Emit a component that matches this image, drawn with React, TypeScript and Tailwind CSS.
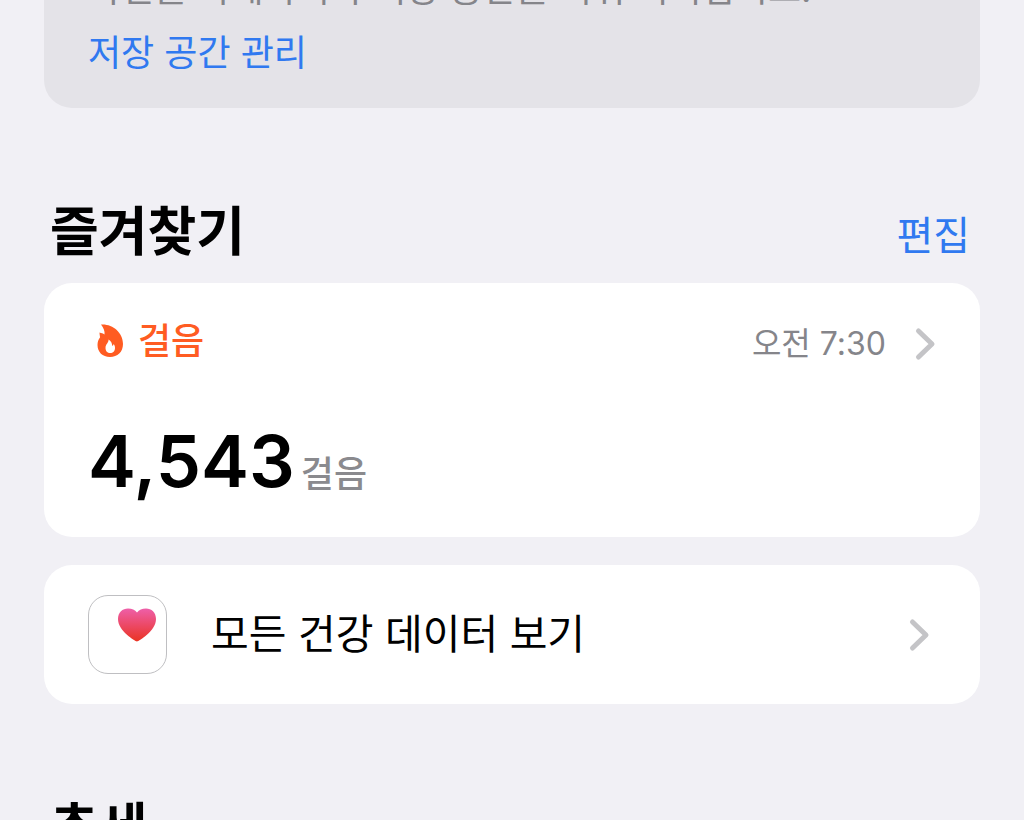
import React from 'react';

const Chevron: React.FC = () => (
  <svg width="22" height="34" viewBox="0 0 22 34" fill="none" aria-hidden="true">
    <path d="M4.500 4 L18 17 L4.500 30" stroke="#c4c4c7" strokeWidth="5" strokeLinecap="round" strokeLinejoin="round" />
  </svg>
);

const FlameIcon: React.FC = () => (
  <svg width="28" height="36" viewBox="0 0 28 36" aria-hidden="true">
    <path
      fill="#ff5c22"
      fillRule="evenodd"
      d="M5 1.500 C16 0.500 27 9 27 21 C27 29 21.500 34 14 34 C6.500 34 1.500 29 1.500 22 C1.500 18.500 2.500 16.500 4 14.500 C4 13 3.500 11.500 3.500 9.500 C5.500 10 7 10.500 8.500 11.500 C9 8 7.500 5 5 1.500 Z M12.500 16.500 C13 19.500 9.500 21 9.500 25 C9.500 28 11.500 30 14.200 30 C17 30 19 28 19 25 C19 23 18.500 22 17.500 21 C17.500 22 17 22.500 16.200 23 C16.200 20 15 18 12.500 16.500 Z"
    />
  </svg>
);

const HeartIcon: React.FC = () => (
  <svg width="38" height="34" viewBox="0 0 38 34" aria-hidden="true">
    <defs>
      <linearGradient id="heart" x1="0" y1="0" x2="0" y2="1">
        <stop offset="0" stopColor="#ee5fa9" />
        <stop offset="1" stopColor="#ea3323" />
      </linearGradient>
    </defs>
    <path
      fill="url(#heart)"
      d="M19 33.500 C17 33 0 23 0 11 C0 4.500 4.500 0.500 10 0.500 C14 0.500 17 2 19 4.500 C21 2 24 0.500 28 0.500 C33.500 0.500 38 4.500 38 11 C38 23 21 33 19 33.500 Z"
    />
  </svg>
);

const App: React.FC = () => {
  return (
    <main
      lang="ko"
      className="h-screen overflow-hidden bg-[#f1f0f5] px-11 font-['Inter','Noto_Sans_CJK_KR',sans-serif] text-black"
    >
      <section className="-mt-12 rounded-[28px] bg-[#e4e3e8] px-11 pt-3 pb-6 text-4xl">
        <p className="mb-2 leading-[50px] text-[#85858a]">사진을 삭제하거나 저장 공간을 비워 버리십시오.</p>
        <a href="#storage" className="block leading-[62px] text-[#3079f0]">
          저장 공간 관리
        </a>
      </section>

      <section className="mt-[82px]">
        <div className="flex items-end justify-between pr-2.5 pl-1.5">
          <h2 className="text-[53px] leading-[84px] font-bold">즐겨찾기</h2>
          <button type="button" className="text-[40px] leading-[76px] text-[#3079f0]">
            편집
          </button>
        </div>

        <a href="#steps" className="mt-[9px] block rounded-[28px] bg-white px-11 pt-8 pb-[26px]">
          <div className="flex items-start justify-between">
            <div className="flex items-center gap-3.5 pl-2 text-[#ff5c22]">
              <FlameIcon />
              <h3 className="text-4xl leading-[52px] font-medium">걸음</h3>
            </div>
            <div className="flex items-center gap-7">
              <time className="text-[32px] leading-[58px] text-[#85858a]">오전 7:30</time>
              <Chevron />
            </div>
          </div>
          <p className="mt-[38px] flex items-baseline gap-1.5">
            <span className="text-7xl leading-[100px] font-semibold">4,543</span>
            <span className="text-4xl font-medium text-[#8a8a8e]">걸음</span>
          </p>
        </a>

        <a href="#all" className="mt-7 flex items-center rounded-[28px] bg-white py-7 pr-[50px] pl-11">
          <span className="flex size-[79px] items-start justify-end rounded-[20px] border border-[#bfbfc2] px-2.5 py-3">
            <HeartIcon />
          </span>
          <span className="ml-11 flex-1 text-[41px] leading-[83px]">모든 건강 데이터 보기</span>
          <Chevron />
        </a>
      </section>

      <section className="mt-[82px]">
        <h2 className="pl-1.5 text-[53px] leading-[84px] font-bold">추세</h2>
      </section>
    </main>
  );
};

export default App;
